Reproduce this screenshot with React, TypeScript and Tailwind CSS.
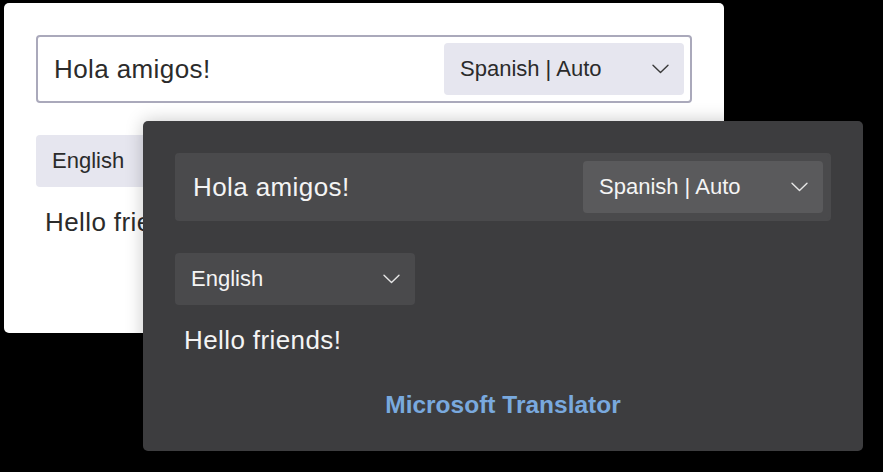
import React from "react";

function Chevron({ color }: { color: string }) {
  return (
    <svg width="17" height="10" viewBox="0 0 17 10" fill="none">
      <path d="M1 1.2 L8.5 8.6 L16 1.2" stroke={color} strokeWidth="1.4" strokeLinecap="round" strokeLinejoin="round" />
    </svg>
  );
}

function Panel({ dark }: { dark: boolean }) {
  const text = dark ? "text-[#f4f4f4]" : "text-[#2b2b2b]";
  const chev = dark ? "#e6e6e6" : "#3a3a3a";
  return (
    <div
      className={`w-[720px] h-[330px] rounded-[5px] px-8 pt-8 flex flex-col ${
        dark ? "bg-[#3d3d3f] shadow-[0_0_18px_rgba(0,0,0,0.22)]" : "bg-white"
      }`}
      style={{ fontFamily: '"Liberation Sans", Arial, sans-serif' }}
    >
      <div
        className={`w-[656px] h-[68px] rounded-[4px] border-2 flex items-center justify-between pl-4 pr-[6px] ${
          dark ? "bg-[#4a4a4c] border-[#4a4a4c]" : "bg-white border-[#aaa9bb]"
        }`}
      >
        <span className={`text-[26px] leading-none tracking-[0.4px] ${text}`}>Hola amigos!</span>
        <div
          className={`w-[240px] h-[52px] rounded-[4px] flex items-center justify-between pl-4 pr-[15px] ${
            dark ? "bg-[#5a5a5c]" : "bg-[#e6e6ef]"
          }`}
        >
          <span className={`text-[22px] leading-none ${text}`}>Spanish | Auto</span>
          <Chevron color={chev} />
        </div>
      </div>
      <div
        className={`mt-8 w-[240px] h-[52px] rounded-[4px] flex items-center justify-between pl-4 pr-[15px] ${
          dark ? "bg-[#4a4a4c]" : "bg-[#e6e6ef]"
        }`}
      >
        <span className={`text-[22px] leading-none ${text}`}>English</span>
        <Chevron color={chev} />
      </div>
      <div className={`mt-[22px] ml-[9px] text-[26px] leading-none tracking-[0.4px] ${text}`}>Hello friends!</div>
      {dark && (
        <div className="mt-[40px] text-center text-[24.5px] leading-none font-bold text-[#79a9de]">
          Microsoft Translator
        </div>
      )}
    </div>
  );
}

export default function App() {
  return (
    <div className="relative w-[883px] h-[472px] bg-black overflow-hidden">
      <div className="absolute left-[4px] top-[3px]">
        <Panel dark={false} />
      </div>
      <div className="absolute left-[143px] top-[121px]">
        <Panel dark={true} />
      </div>
    </div>
  );
}
